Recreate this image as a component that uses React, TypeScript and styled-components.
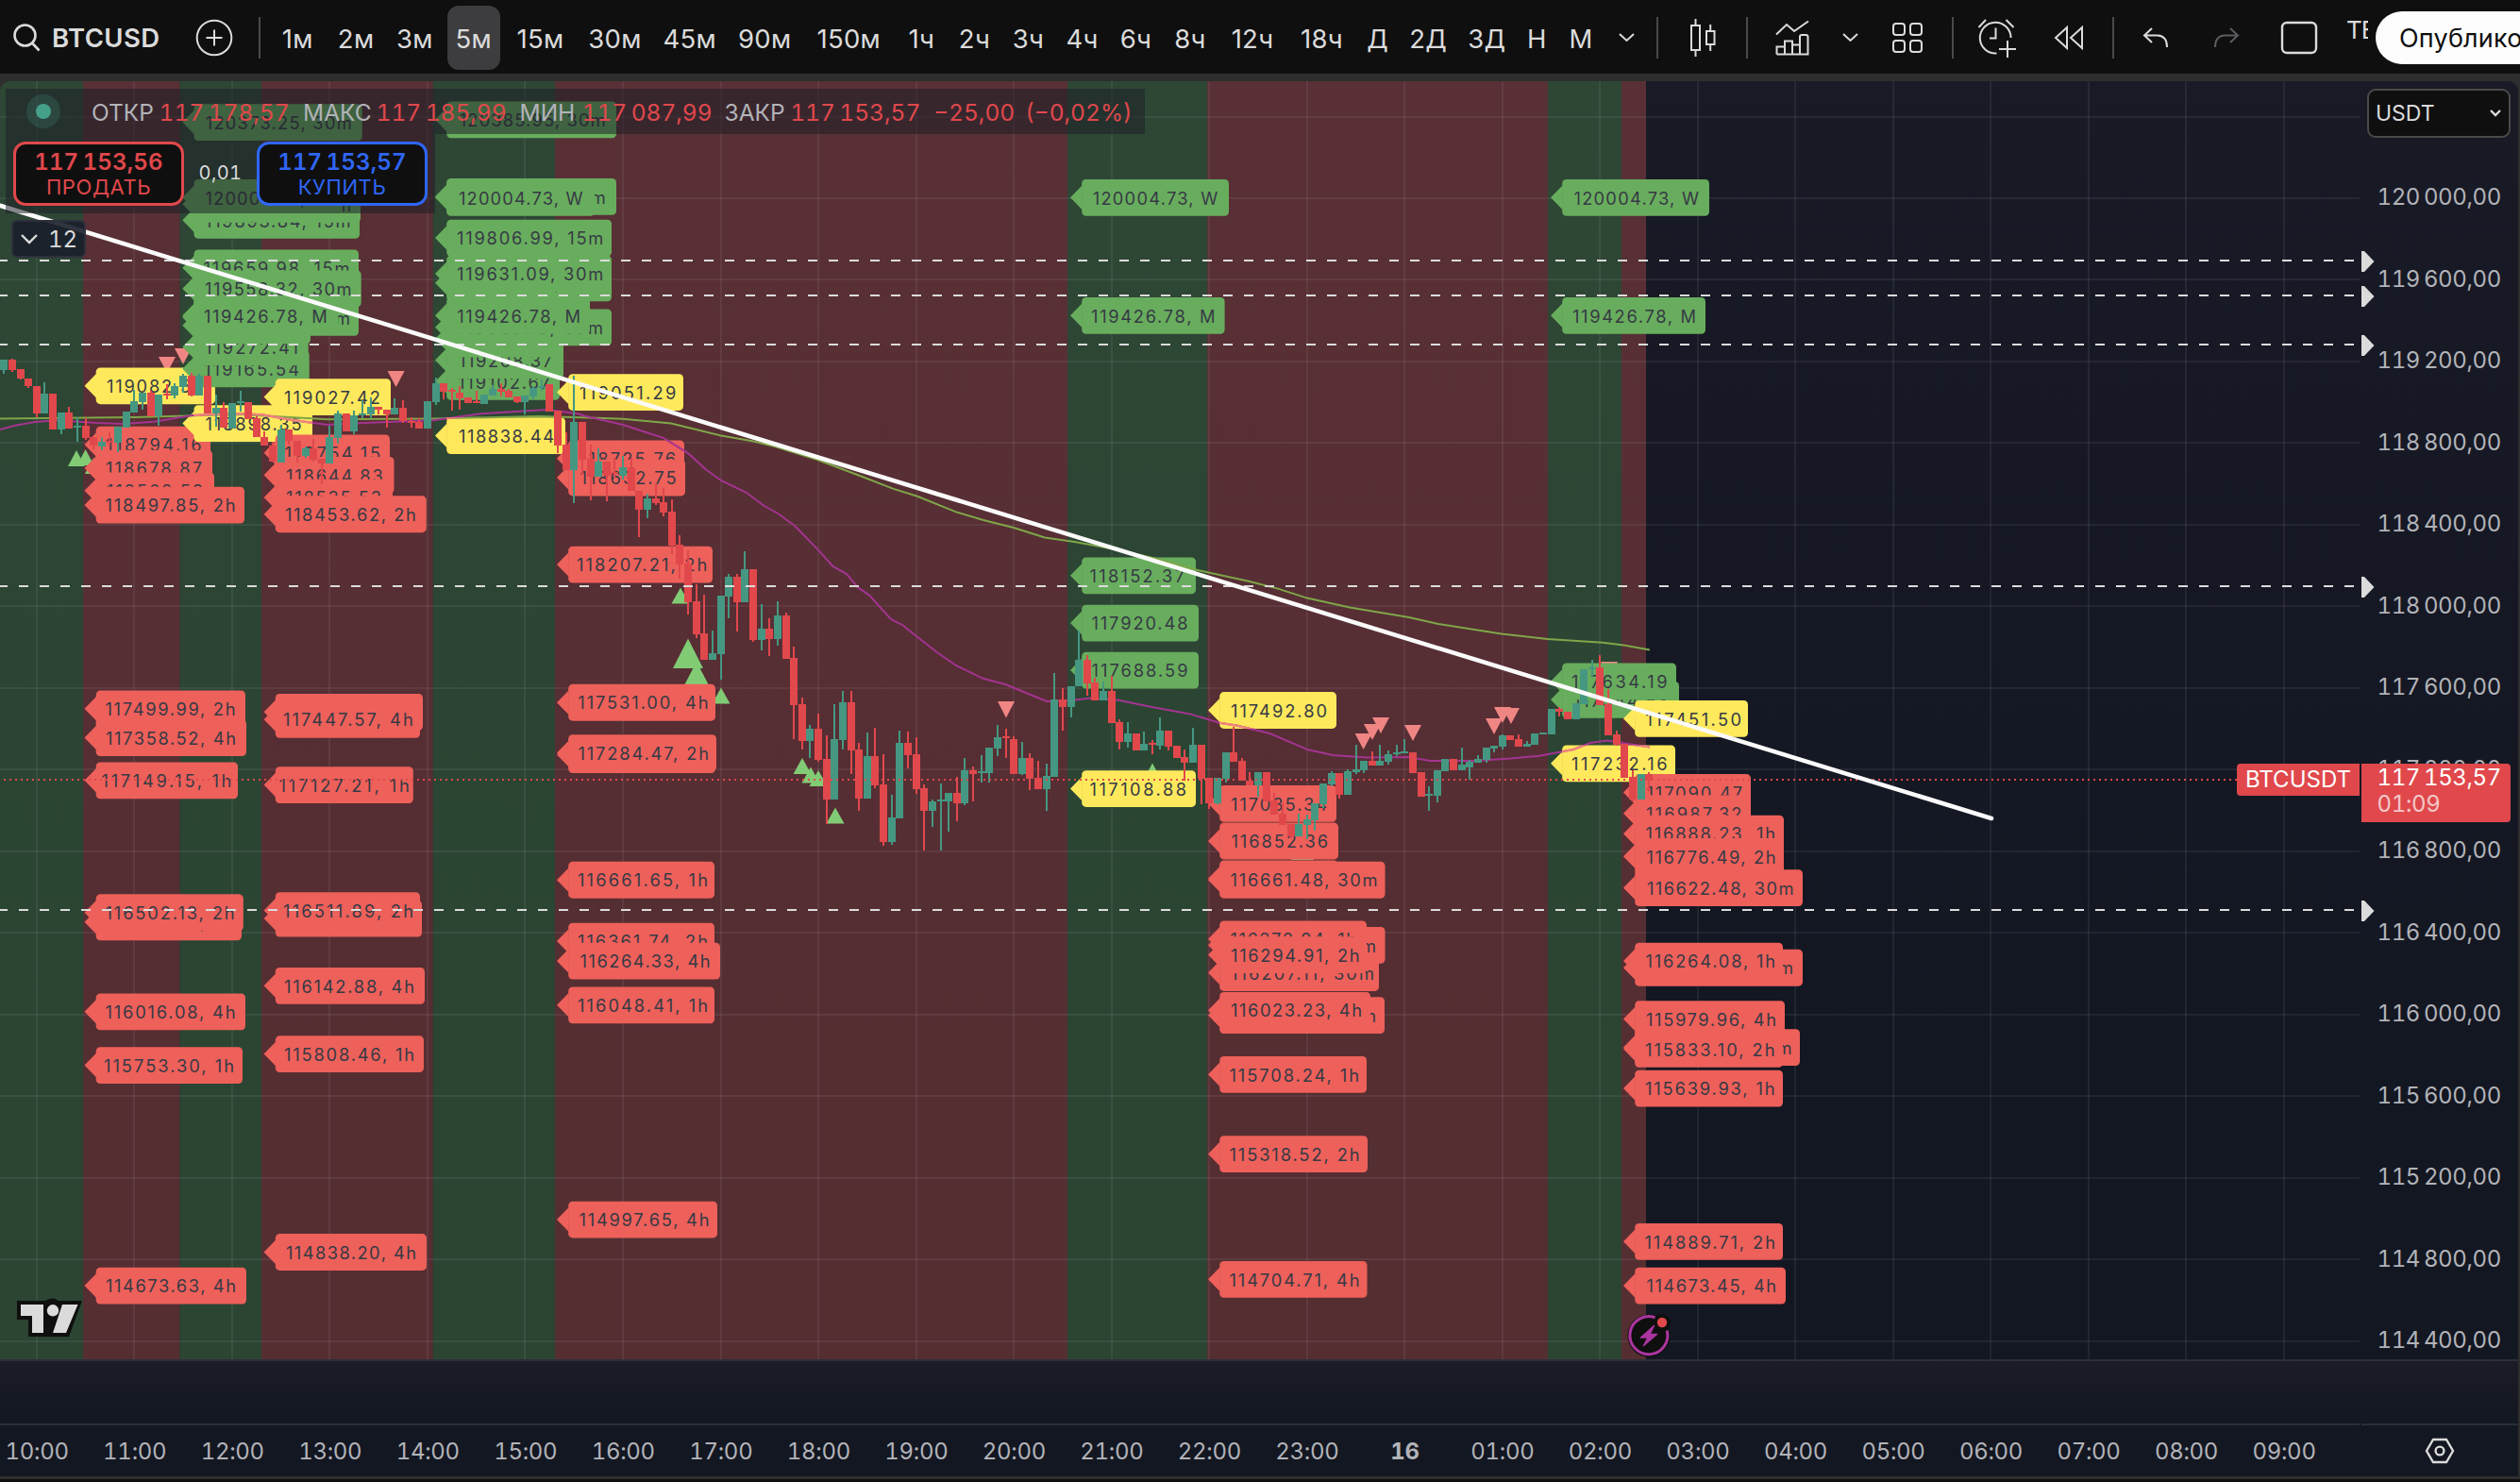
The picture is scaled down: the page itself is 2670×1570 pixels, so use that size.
import React from 'react';
import styled, { createGlobalStyle } from 'styled-components';

const GlobalStyle = createGlobalStyle`
  * { box-sizing: border-box; }
  html, body { margin: 0; padding: 0; background: #2e2e2e; overflow: hidden; }
  body { font-family: Inter, Roboto, "Liberation Sans", sans-serif; }
`;

const RED = '#e0484c';
const TEAL = '#459782';
const INK = '#dbdbdb';

/* ---------- price scale ---------- */
const TOP = 86;
const PLOT_W = 2500;
const PLOT_H = 1354;
const HOUR = 103.53;
const FIRST_HOUR = 38.8;
const STEP = 86.49;
const priceY = (p: number) => 210 + ((120000 - p) * STEP) / 400;

/* ---------- layout ---------- */
const Page = styled.div`
  width: 2670px;
  height: 1570px;
  display: flex;
  flex-direction: column;
  background: #2e2e2e;
  overflow: hidden;
`;

const Header = styled.header`
  height: 78px;
  padding-top: 2px;
  flex: none;
  display: flex;
  align-items: center;
  background: #0f0f0f;
  color: ${INK};
  margin-bottom: 8px;
  overflow: hidden;
`;

const Slot = styled.div<{ $w: number }>`
  width: ${(p) => p.$w}px;
  flex: none;
  height: 68px;
  display: flex;
  align-items: center;
  justify-content: center;
`;

const Divider = styled.div`
  width: 2px;
  height: 44px;
  flex: none;
  background: #4a4a4a;
`;

const Symbol = styled.div`
  width: 141px;
  flex: none;
  font-size: 27.5px;
  font-weight: 600;
  letter-spacing: 0.4px;
`;

const Interval = styled.div<{ $w: number }>`
  width: ${(p) => p.$w}px;
  flex: none;
  display: flex;
  justify-content: center;
`;

const IntervalText = styled.span<{ $active?: boolean }>`
  height: 68px;
  padding: 2px 9px 0;
  border-radius: 12px;
  display: flex;
  align-items: center;
  font-size: 27.5px;
  letter-spacing: 0.3px;
  white-space: nowrap;
  background: ${(p) => (p.$active ? '#3d3d3f' : 'transparent')};
`;

const LayoutName = styled.div`
  width: 23px;
  height: 40px;
  margin: 0 8px 14px 4px;
  padding-top: 3px;
  flex: none;
  overflow: hidden;
  font-size: 26px;
  letter-spacing: -1px;
  white-space: nowrap;
`;

const Publish = styled.div`
  height: 56px;
  width: 240px;
  flex: none;
  border-radius: 28px;
  background: #fdfdfd;
  color: #0f0f0f;
  font-size: 27px;
  line-height: 57px;
  padding-left: 25px;
  letter-spacing: 0.2px;
`;

const Body = styled.main`
  flex: none;
  width: 2668px;
  height: 1478px;
  display: grid;
  grid-template-columns: ${PLOT_W}px 168px;
  grid-template-rows: ${PLOT_H}px 68px 56px;
  border-radius: 10px 10px 0 0;
  background: linear-gradient(#181a26, #131722 70%);
  overflow: hidden;
`;

const Plot = styled.section`
  position: relative;
  overflow: hidden;
`;

const PriceAxis = styled.aside`
  position: relative;
  padding-top: ${210 - TOP - STEP / 2 - 1}px;
  overflow: hidden;
`;

const PriceTick = styled.div`
  height: ${STEP}px;
  padding-left: 18.5px;
  display: flex;
  align-items: center;
  font-size: 24px;
  color: #b2b3b8;
  white-space: nowrap;
`;

const Num = styled.span<{ $ls?: number }>`
  font-feature-settings: 'tnum';
  letter-spacing: ${(p) => p.$ls ?? 0}px;
  white-space: nowrap;
`;

const Strip = styled.div`
  border-top: 2px solid #2c2e3a;
  background: linear-gradient(#1a1c27, #131722);
`;

const TimeAxis = styled.div`
  border-top: 2px solid #2c2e3a;
  background: #131722;
  display: flex;
  align-items: center;
  overflow: hidden;
`;

const TimeTick = styled.div<{ $bold?: boolean; $first?: boolean }>`
  width: ${HOUR}px;
  flex: none;
  margin-left: ${(p) => (p.$first ? FIRST_HOUR + 0.4 - HOUR / 2 : 0)}px;
  padding-top: 1px;
  text-align: center;
  font-size: 24px;
  font-weight: ${(p) => (p.$bold ? 700 : 400)};
  color: #b2b3b8;
`;

const AxisCorner = styled.div`
  border-top: 2px solid #2c2e3a;
  background: #131722;
  display: flex;
  align-items: center;
  justify-content: center;
  margin-left: 2px;
`;

const Footer = styled.div`
  height: 3px;
  margin-top: 3px;
  flex: none;
  background: #0f0f0f;
`;

/* ---------- overlays ---------- */
const Legend = styled.div`
  position: absolute;
  left: 6px;
  top: 8px;
`;

const StatusRow = styled.div`
  width: 1207px;
  height: 48px;
  padding-left: 22px;
  display: flex;
  align-items: center;
  background: rgba(26, 28, 38, 0.52);
`;

const StatusDot = styled.div`
  width: 36px;
  height: 36px;
  margin-right: 33px;
  flex: none;
  border-radius: 50%;
  background: rgba(69, 151, 130, 0.22);
  display: flex;
  align-items: center;
  justify-content: center;

  &::after {
    content: '';
    width: 16px;
    height: 16px;
    border-radius: 50%;
    background: #45a08a;
  }
`;

const Quote = styled.span<{ $w: number; $red?: boolean }>`
  width: ${(p) => p.$w}px;
  flex: none;
  font-size: 24.5px;
  white-space: nowrap;
  font-feature-settings: ${(p) => (p.$red ? "'tnum'" : 'normal')};
  color: ${(p) => (p.$red ? RED : '#b2b3b8')};
  padding-top: 2px;
`;

const TradeRow = styled.div`
  width: 455px;
  height: 84px;
  padding: 8px;
  display: flex;
  background: rgba(26, 28, 38, 0.52);
`;

const TradeButton = styled.div<{ $color: string }>`
  width: 181px;
  height: 68px;
  padding-top: 2px;
  flex: none;
  border: 3px solid ${(p) => p.$color};
  border-radius: 13px;
  background: #0f0f0f;
  color: ${(p) => p.$color};
  display: flex;
  flex-direction: column;
  align-items: center;
  justify-content: center;
`;

const TradePrice = styled.span`
  font-size: 24px;
  line-height: 26px;
  font-weight: 600;
  font-feature-settings: 'tnum';
  letter-spacing: 0.2px;
`;

const TradeSide = styled.span`
  font-size: 22px;
  line-height: 27px;
  letter-spacing: 0.6px;
`;

const Spread = styled.span`
  width: 77px;
  padding: 21px 0 0;
  text-align: center;
  font-size: 20px;
  letter-spacing: 0.4px;
  font-feature-settings: 'tnum';
  color: ${INK};
`;

const Collapse = styled.div`
  width: 79px;
  height: 40px;
  margin: 7px 0 0 6px;
  border: 2px solid #2d303c;
  border-radius: 6px;
  background: rgba(26, 30, 42, 0.9);
  color: ${INK};
  font-size: 24px;
  font-feature-settings: 'tnum';
  display: flex;
  align-items: center;
  gap: 11px;
  padding-left: 8px;
`;

const PriceTag = styled.div`
  position: absolute;
  left: 2px;
  top: 723px;
  width: 158px;
  height: 62px;
  padding: 0 0 0 16.5px;
  border-radius: 0 4px 4px 0;
  background: ${RED};
  color: #fff;
  font-size: 24px;
  line-height: 29px;

  & > div:last-child { color: #f3c8c9; line-height: 27px; }
`;

const SymbolTag = styled.div`
  position: absolute;
  right: 0;
  top: 723px;
  width: 130px;
  height: 34px;
  border-radius: 4px 0 0 4px;
  background: ${RED};
  color: #fff;
  font-size: 24px;
  line-height: 34px;
  text-align: center;
`;

const Currency = styled.div`
  position: absolute;
  left: 8px;
  top: 8px;
  width: 152px;
  height: 52px;
  padding: 0 8px 0 7px;
  border: 2px solid #4a4a4a;
  border-radius: 9px;
  background: #0f0f0f;
  color: ${INK};
  font-size: 23px;
  display: flex;
  align-items: center;
  justify-content: space-between;
`;

const ArrowMark = styled.svg<{ $y: number }>`
  position: absolute;
  left: 2px;
  top: ${(p) => p.$y - TOP - 10}px;
`;

const Chart = styled.svg`
  display: block;
`;

const LabelText = styled.text`
  font-family: Inter, Roboto, sans-serif;
  font-size: 18.3px;
  fill: #363a45;
`;

/* ---------- data ---------- */
const intervals: [string, number][] = [
  ['1м', 61.5], ['2м', 62.25], ['3м', 62.25], ['5м', 62.5], ['15м', 79], ['30м', 79], ['45м', 79.5],
  ['90м', 79.5], ['150м', 98.5], ['1ч', 55.5], ['2ч', 57], ['3ч', 57], ['4ч', 57], ['6ч', 57], ['8ч', 58],
  ['12ч', 74], ['18ч', 73], ['Д', 45.5], ['2Д', 61.5], ['3Д', 62.5], ['Н', 43.5], ['М', 50],
];

const times = ['10:00', '11:00', '12:00', '13:00', '14:00', '15:00', '16:00', '17:00', '18:00', '19:00', '20:00',
  '21:00', '22:00', '23:00', '16', '01:00', '02:00', '03:00', '04:00', '05:00', '06:00', '07:00', '08:00', '09:00'];

const prices = [120000, 119600, 119200, 118800, 118400, 118000, 117600, 117200, 116800, 116400, 116000, 115600,
  115200, 114800, 114400];

const formatPrice = (p: number) => `${Math.floor(p / 1000)}\u2009${String(p % 1000).padStart(3, '0')},00`;

const GREEN_BAND = 'rgba(100,175,90,0.3)';
const RED_BAND = 'rgba(237,98,91,0.3)';
const bands: [number, number, string][] = [
  [0, 88, GREEN_BAND], [88, 190.5, RED_BAND], [190.5, 277, GREEN_BAND], [277, 458.7, RED_BAND],
  [458.7, 588, GREEN_BAND], [588, 1131, RED_BAND], [1131, 1279, GREEN_BAND], [1279, 1640, RED_BAND],
  [1640, 1718, GREEN_BAND], [1718, 1744, RED_BAND],
];

const levels = [276, 313, 365, 621, 964];

type Kind = 'g' | 'y' | 'r';
const fills: Record<Kind, string> = { g: '#68ad5d', y: '#fee95c', r: '#ee605a' };

/* kind, text, tip x, right edge, text start, text end; listed in paint order */
type Tag = [Kind, string, number, number, number, number];
const tags: Tag[] = [
  ['y', '119082.53', 89.5, 228, 113, 215],
  ['r', '118794.16', 89.5, 223, 112, 213.5],
  ['r', '118678.87', 89.5, 225, 112, 214],
  ['r', '118568.58', 89.5, 227, 113, 215],
  ['r', '118497.85, 2h', 89.5, 259, 111.5, 249.5],
  ['r', '117499.99, 2h', 89.5, 260, 111.5, 249.5],
  ['r', '117358.52, 4h', 89.5, 261, 112, 250],
  ['r', '117149.15, 1h', 89.5, 252, 107.6, 245.4],
  ['r', '116455.13, 1h', 89.5, 256, 110, 247],
  ['r', '116502.13, 2h', 89.5, 257.8, 111.5, 248.5],
  ['r', '116016.08, 4h', 89.5, 260, 111.5, 249.5],
  ['r', '115753.30, 1h', 89.5, 257, 110, 248],
  ['r', '114673.63, 4h', 89.5, 261, 112, 250],

  ['y', '118898.35', 193.3, 331, 217.5, 319.6],
  ['g', '119165.54', 193.3, 327.7, 216, 317],
  ['g', '119272.41', 193.3, 326.7, 217, 316],
  ['g', '119378.04', 193.3, 329, 217, 318],
  ['g', '119417.20, 15m', 193.3, 380, 216, 371],
  ['g', '119659.98, 15m', 193.3, 380, 215.5, 370.5],
  ['g', '119558.32, 30m', 193.3, 382.7, 217, 372.5],
  ['g', '119426.78, M', 193.3, 358, 216, 346.7],
  ['g', '119893.84, 15m', 193.3, 381, 217, 371.5],
  ['g', '119972.15, 30m', 193.3, 382, 217, 372],
  ['g', '120004.73, W', 193.3, 362, 217.5, 349],
  ['g', '120373.25, 30m', 193.3, 383.7, 217.7, 372.7],

  ['y', '119027.42', 279.6, 414, 301, 403],
  ['r', '118754.15', 279.6, 413, 301.5, 403],
  ['r', '118644.83', 279.6, 417.5, 303, 405.7],
  ['r', '118535.53', 279.6, 416, 303, 404],
  ['r', '118453.62, 2h', 279.6, 451.8, 302, 440.8],
  ['r', '117484.10, 2h', 279.6, 448, 300, 438],
  ['r', '117447.57, 4h', 279.6, 445, 300, 437.8],
  ['r', '117127.21, 1h', 279.6, 437.8, 295.4, 433.7],
  ['r', '116472.33, 4h', 279.6, 447, 300, 438],
  ['r', '116511.89, 2h', 279.6, 445, 300, 438],
  ['r', '116142.88, 4h', 279.6, 450, 301, 439],
  ['r', '115808.46, 1h', 279.6, 449, 301, 439],
  ['r', '114838.20, 4h', 279.6, 452, 303, 441],

  ['g', '119102.67', 461, 593, 485, 583],
  ['g', '119208.37', 461, 597, 486, 585],
  ['g', '119312.55', 461, 597, 486, 585],
  ['g', '119369.10, 30m', 461, 648, 484, 639],
  ['g', '119586.20, 15m', 461, 648, 484, 639],
  ['g', '119631.09, 30m', 461, 648, 484, 639.3],
  ['g', '119426.78, M', 461, 625, 484.3, 615],
  ['g', '119806.99, 15m', 461, 648, 484, 639.3],
  ['g', '120009.41, 30m', 461, 653, 486, 641.7],
  ['g', '120004.73, W', 461, 630, 486, 617.5],
  ['g', '120385.95, 30m', 461, 653, 486.7, 641.7],
  ['y', '118838.44', 461, 599, 486, 587],

  ['y', '119051.29', 590, 724, 614, 716.3],
  ['r', '118725.76', 590, 725, 614, 716],
  ['r', '118632.75', 590, 726, 614.5, 716.5],
  ['r', '118207.21, 2h', 590, 755, 611, 749.3],
  ['r', '117531.00, 4h', 590, 758, 612.3, 750.6],
  ['r', '117274.90, 1h', 590, 758, 612, 749],
  ['r', '117284.47, 2h', 590, 759, 612.5, 751],
  ['r', '116661.65, 1h', 590, 757, 612, 750],
  ['r', '116361.74, 2h', 590, 757, 612, 750],
  ['r', '116264.33, 4h', 590, 763, 614.5, 752.6],
  ['r', '116048.41, 1h', 590, 757, 612, 750],
  ['r', '114997.65, 4h', 590, 760, 613.5, 751.5],

  ['g', '120004.73, W', 1134, 1302, 1157.7, 1290.3],
  ['g', '119426.78, M', 1134, 1297.6, 1156, 1287.5],
  ['g', '118152.37', 1134, 1267, 1154.5, 1255],
  ['g', '117920.48', 1134, 1270, 1156.5, 1258.5],
  ['g', '117688.59', 1134, 1270, 1156.5, 1258.5],
  ['y', '117108.88', 1134, 1267, 1154.5, 1257],

  ['y', '117492.80', 1280, 1416, 1304, 1406],
  ['r', '117035.34', 1280, 1416, 1304, 1406],
  ['r', '116852.36', 1280, 1418, 1304.5, 1407],
  ['r', '116667.48', 1280, 1418, 1304.5, 1407],
  ['r', '116661.48, 30m', 1280, 1467.5, 1303.6, 1459.4],
  ['r', '116207.11, 30m', 1280, 1461, 1304, 1456],
  ['r', '116341.91, 30m', 1280, 1467.5, 1304, 1458],
  ['r', '116372.04, 1h', 1280, 1448, 1303.5, 1437],
  ['r', '116294.91, 2h', 1280, 1448, 1304, 1440.6],
  ['r', '115998.61, 30m', 1280, 1467, 1304, 1458],
  ['r', '116023.23, 4h', 1280, 1452, 1304, 1443],
  ['r', '115708.24, 1h', 1280, 1448, 1302.5, 1440],
  ['r', '115318.52, 2h', 1280, 1449, 1302.5, 1440.5],
  ['r', '114704.71, 4h', 1280, 1448.5, 1302.5, 1440.5],

  ['g', '120004.73, W', 1643, 1811, 1667.5, 1800],
  ['g', '119426.78, M', 1643, 1807, 1666, 1797],
  ['g', '117544.58', 1643, 1779, 1667, 1768],
  ['g', '117634.19', 1643, 1776, 1665, 1766.7],
  ['y', '117232.16', 1643, 1775, 1665, 1766.7],

  ['y', '117451.50', 1720, 1852, 1743.5, 1845],
  ['r', '117090.47', 1720, 1855, 1744.5, 1846],
  ['r', '116987.32', 1720, 1855, 1744, 1845.5],
  ['r', '116888.23, 1h', 1720, 1890, 1743.5, 1881],
  ['r', '116776.49, 2h', 1720, 1890, 1744.5, 1881.5],
  ['r', '116622.48, 30m', 1720, 1910, 1745, 1900.5],
  ['r', '116231.45, 30m', 1720, 1910, 1745, 1900],
  ['r', '116264.08, 1h', 1720, 1889, 1743.5, 1881],
  ['r', '115841.50, 30m', 1720, 1907, 1744, 1898.5],
  ['r', '115979.96, 4h', 1720, 1891, 1744, 1882],
  ['r', '115833.10, 2h', 1720, 1889, 1743, 1880.5],
  ['r', '115639.93, 1h', 1720, 1889, 1743, 1880.5],
  ['r', '114889.71, 2h', 1720, 1889, 1742.5, 1881],
  ['r', '114673.45, 4h', 1720, 1892, 1744.5, 1882],
];

/* direction (1 up, 0 down), body top, body bottom, high, low */
const candles: number[][] = [
  [1,381,392,381,396],[0,381,392,380,394],[0,391,401,391,402],[0,401,409,401,411],[0,409,438,409,442],
  [1,417,438,405,438],[0,417,455,417,455],[1,437,455,437,460],[0,437,454,431,454],[1,451,453,442,468],
  [0,451,464,443,466],[0,463,472,463,476],[1,468,473,463,477],[0,467,469,458,473],[1,452,469,452,479],
  [1,436,453,436,453],[1,425,437,413,437],[1,416,426,416,434],[0,416,441,414,441],[1,418,441,418,451],
  [0,417,419,407,423],[1,409,419,406,422],[1,398,410,396,416],[0,398,419,395,420],[1,398,419,396,419],
  [0,398,438,398,438],[1,432,438,418,452],[0,432,453,426,453],[1,427,454,427,454],[1,425,427,414,436],
  [0,426,444,426,444],[0,443,463,441,463],[0,463,472,457,472],[0,472,489,468,489],[1,455,490,450,490],
  [0,455,467,455,471],[0,467,483,467,490],[1,475,483,473,485],[0,475,487,465,489],[0,486,491,486,513],
  [1,463,491,451,491],[1,438,464,435,470],[0,438,457,438,457],[1,440,457,435,460],[1,438,440,424,443],
  [1,431,439,421,443],[0,431,434,431,439],[0,434,439,434,453],[1,432,439,422,439],[0,432,446,424,448],
  [0,446,448,442,453],[0,447,454,443,454],[1,425,454,425,454],[1,406,426,400,429],[0,406,415,406,423],
  [0,413,415,411,435],[0,416,422,409,434],[0,421,427,421,427],[0,425,427,414,427],[1,418,428,418,428],
  [1,412,419,408,419],[0,412,415,406,420],[0,414,421,412,421],[0,420,426,420,427],[1,419,426,419,439],
  [1,411,420,409,423],[1,409,411,402,414],[0,407,436,407,436],[0,435,472,435,480],[0,471,498,458,498],
  [1,447,498,398,533],[0,447,487,447,503],[0,486,505,471,530],[1,489,505,475,505],[0,489,504,489,531],
  [0,500,502,485,506],[1,495,504,483,508],[0,495,520,485,520],[0,520,540,520,569],[1,528,540,523,549],
  [0,528,533,513,535],[0,532,543,517,547],[0,542,578,529,587],[0,577,598,567,613],[0,597,638,583,651],
  [0,637,672,619,676],[0,671,699,630,699],[1,692,699,668,699],[1,631,693,631,720],[1,611,632,608,655],
  [0,611,638,608,669],[1,603,638,584,638],[0,603,678,603,680],[1,666,678,640,689],[0,666,677,655,695],
  [1,652,677,637,684],[0,652,698,649,698],[0,697,747,685,783],[0,746,785,739,794],[1,772,785,768,803],
  [0,772,805,756,807],[0,804,847,779,873],[1,783,847,746,847],[1,744,784,732,794],[0,744,795,732,820],
  [0,794,846,787,859],[1,801,846,776,846],[0,801,832,771,835],[0,831,892,799,896],[1,866,892,842,895],
  [1,787,867,774,867],[0,787,800,775,814],[0,799,836,781,841],[0,835,859,831,901],[1,849,859,847,876],
  [1,847,849,830,901],[1,840,849,840,881],[0,840,851,823,870],[1,816,851,803,853],[0,816,820,812,849],
  [1,817,819,800,829],[1,792,819,792,829],[1,781,793,768,801],[0,780,782,772,803],[0,783,820,780,820],
  [1,803,820,786,821],[0,803,825,798,837],[0,824,836,806,836],[1,822,836,809,859],[1,741,823,713,823],
  [0,741,749,729,774],[1,727,749,727,760],[1,699,727,668,727],[0,699,724,694,737],[0,723,742,718,742],
  [1,732,742,722,742],[0,732,766,716,766],[0,765,786,762,794],[1,777,786,765,792],[0,777,795,777,795],
  [1,788,795,775,795],[0,787,789,784,799],[1,774,790,760,794],[0,774,791,774,795],[0,790,803,790,803],
  [0,802,808,794,827],[1,789,808,771,808],[0,789,825,789,852],[0,824,851,824,857],[1,824,851,824,852],
  [1,797,825,797,829],[0,797,807,770,807],[0,806,827,803,827],[0,827,832,818,832],[1,818,832,818,844],
  [0,818,849,818,849],[0,848,863,840,863],[0,862,874,851,874],[0,873,886,873,888],[1,873,886,862,886],
  [1,868,874,863,889],[1,851,869,851,880],[1,830,852,830,856],[1,819,831,817,833],[0,819,842,819,846],
  [1,817,842,815,842],[1,815,818,789,820],[1,806,816,806,819],[0,806,811,796,811],[1,806,811,789,811],
  [1,799,807,795,810],[1,797,799,789,801],[1,796,798,783,798],[0,797,819,797,819],[0,818,844,818,844],
  [1,841,843,833,859],[1,816,843,816,850],[1,804,817,804,817],[0,804,816,804,816],[1,810,816,792,816],
  [1,807,813,805,826],[1,804,808,800,808],[1,792,805,792,808],[1,790,793,790,797],[1,779,791,778,794],
  [0,779,784,779,784],[0,783,791,778,791],[1,788,791,785,791],[1,777,789,777,789],[1,776,778,776,778],
  [1,751,778,751,778],[0,751,754,749,759],[0,754,762,754,762],[1,745,762,745,762],[1,709,746,709,746],
  [1,707,709,699,716],[0,707,747,694,747],[0,746,779,730,779],[0,778,789,774,790],[0,788,824,788,824],
  [0,823,847,816,849],[1,820,847,820,847],[0,820,827,818,838],
];

const slowAverage = '0,443.5 143,442 253,439 347,444.3 459,443.5 571,441 640,443 660,443.7 711,448.6 764,461.6 797,467.3 821,473 866,487 911,504 946,517.6 972,525.7 1013,542.4 1042,551 1074,559 1107,569.4 1140,574.3 1176,581 1225,591.8 1267,603.6 1323,615.7 1354,623.6 1385,633.6 1430,643.6 1493,654 1524,661 1591,671.4 1640,677 1698,680.7 1720.5,683.6 1748,688.6';
const fastAverage = '0,455 16,450.7 37,447 61,445.3 102,448 131,449 163,446.7 204,440 245,438 277.5,439.3 310,445 347,450 392,447.7 459,445.3 510,438.3 580,434 612,438.3 621,441 660,450 703,464 729.4,480.4 748,497.5 764,509 791,522 809,535.5 825,544.5 842,557 866,581.6 882.5,600 897,608 909,622.4 921,630.6 944,656 956,662 972,674.7 992.7,691 1013,705 1041.6,718.8 1066,725.3 1090.6,735.5 1109,743 1135.5,742 1156,739.6 1185,741.8 1220.5,749 1261,756.4 1292,765.7 1310,768.6 1345.5,777 1386,794.3 1412.5,800 1448,802.5 1493,802 1515,806 1564,806 1600,803.6 1631,800.7 1667,794 1685,787 1703,784.6 1725,788 1748,791.4';

/* centre x, top y, width, height */
const sellMarks: number[][] = [
  [177, 378, 18, 17], [194, 369, 18, 17], [419.6, 393, 18, 17], [1066, 743, 18, 17.5], [1444.6, 777, 18, 17],
  [1454, 767, 18, 17], [1463, 760, 18, 17], [1497, 768, 18, 17], [1583, 761, 18, 17], [1592, 749, 18, 17],
  [1601, 750, 18, 17], [1705, 701, 18, 17],
];
const buyMarks: number[][] = [
  [81, 477, 18, 17], [90.6, 476, 18, 17], [99, 485, 18, 17], [721, 622.5, 19, 17], [729, 676.5, 32, 31.5],
  [738, 701, 25, 24], [764, 728.5, 19, 17], [850, 803, 19, 17], [859, 812.5, 19, 17], [867, 816, 19, 17],
  [885, 855.5, 19, 17], [1221, 808.6, 18, 17], [1380, 888, 24, 23],
];

/* ---------- chart parts ---------- */
const PriceLabel = ({ tag }: { tag: Tag }) => {
  const [kind, text, tip, right, from, to] = tag;
  const y = priceY(parseFloat(text)) + 0.3;
  const left = tip + 12.2;
  return (
    <g fill={fills[kind]}>
      <path d={`M${tip} ${y}L${left + 0.5} ${y - 13}V${y + 13}Z`} />
      <rect x={left} y={y - 19.3} width={right - left} height={38.8} rx={4.5} />
      <LabelText x={from} y={y + 7.3} textLength={to - from}>{text}</LabelText>
    </g>
  );
};

const Candle = ({ index, data }: { index: number; data: number[] }) => {
  const [up, top, bottom, high, low] = data;
  const x = 4.3 + index * 8.628;
  const color = up ? TEAL : RED;
  return (
    <g fill={color}>
      <rect x={Math.round(x) - 1} y={high} width={2} height={low - high} />
      <rect x={Math.round(x) - 4} y={top} width={8} height={bottom - top} />
    </g>
  );
};

const PlotDrawing = () => (
  <Chart width={PLOT_W} height={PLOT_H} viewBox={`0 ${TOP} ${PLOT_W} ${PLOT_H}`}>
    {/* the fast average turns salmon where it runs across a yellow label */}
    <clipPath id="overYellow">
      {tags.filter(([kind]) => kind === 'y').map(([, text, tip, right]) => (
        <rect key={text} x={tip + 12} y={priceY(parseFloat(text)) - 19} width={right - tip - 12} height={38.8} />
      ))}
    </clipPath>
    {bands.map(([a, b, c]) => <rect key={a} x={a} y={TOP} width={b - a} height={PLOT_H} fill={c} />)}
    <g fill="rgba(240,243,250,0.065)">
      {times.map((t, i) => <rect key={t} x={Math.round(FIRST_HOUR + i * HOUR) - 1} y={TOP} width={2} height={PLOT_H} />)}
      {[120400, ...prices].map((p) => <rect key={p} x={0} y={Math.round(priceY(p)) - 1} width={PLOT_W} height={2} />)}
    </g>
    <g fill="#f08684">
      {sellMarks.map(([x, y, w, h]) => <path key={x} d={`M${x - w / 2} ${y}H${x + w / 2}L${x} ${y + h}Z`} />)}
    </g>
    <g fill="#82cb75">
      {buyMarks.map(([x, y, w, h]) => <path key={x} d={`M${x - w / 2} ${y + h}H${x + w / 2}L${x} ${y}Z`} />)}
    </g>
    {tags.map((t, i) => <PriceLabel key={i} tag={t} />)}
    <polyline points={slowAverage} fill="none" stroke="#7fa648" strokeWidth={2} />
    <polyline points={fastAverage} fill="none" stroke="#a33490" strokeWidth={2} />
    <polyline points={fastAverage} fill="none" stroke="#f0857c" strokeWidth={2.4} clipPath="url(#overYellow)" />
    {candles.map((c, i) => <Candle key={i} index={i} data={c} />)}
    <path d="M4 826H2370" stroke={RED} strokeWidth={2} strokeDasharray="2 4" />
    {levels.map((y) => (
      <path key={y} d={`M-2 ${y}H2496`} stroke={INK} strokeWidth={2} strokeDasharray="10 12" />
    ))}
    <path d="M0 217.8L2110 867" stroke="#fafafa" strokeWidth={4.6} strokeLinecap="round" />
    <g>
      <circle cx={1747} cy={1415} r={22.5} fill="#0f0f0f" />
      <circle cx={1761} cy={1401} r={9} fill="#0f0f0f" />
      <path d="M1753.5 1395.8A20 20 0 1 0 1766.2 1409.5" fill="none" stroke="#ab35a0" strokeWidth={3} />
      <path d="M1752.5 1404.5L1738.5 1417H1746L1741.5 1425.5L1755.5 1413.5H1748Z" fill="#ab35a0" stroke="#ab35a0" strokeWidth={1.5} strokeLinejoin="round" />
      <circle cx={1761} cy={1401} r={5.2} fill={RED} />
    </g>
    <g>
      <path d="M18 1378H48Q56 1373 62 1378H87L73 1416H30V1398H18Z" fill="#0f0f0f" />
      <path d="M22 1382H46V1412H34V1394H22Z" fill={INK} />
      <circle cx={56} cy={1388.3} r={6.2} fill={INK} />
      <path d="M66 1382H82.5L70 1412H56Z" fill={INK} />
    </g>
  </Chart>
);

/* ---------- icons ---------- */
const Icon = ({ w, h, children, sw = 2, color = INK }: {
  w: number; h: number; children: React.ReactNode; sw?: number; color?: string;
}) => (
  <svg width={w} height={h} viewBox={`0 0 ${w} ${h}`} fill="none" stroke={color} strokeWidth={sw}>{children}</svg>
);

const Chevron = ({ w = 16, h = 9, sw = 2 }: { w?: number; h?: number; sw?: number }) => (
  <Icon w={w} h={h} sw={sw}><path d={`M1 1L${w / 2} ${h - 2}L${w - 1} 1`} /></Icon>
);

const TopBar = () => (
  <Header>
    <Slot $w={55}>
      <Icon w={30} h={30} sw={2.6}><circle cx={13.5} cy={12.5} r={11} /><path d="M21 20.5L28.5 28.5" /></Icon>
    </Slot>
    <Symbol>BTCUSD</Symbol>
    <Slot $w={62}>
      <Icon w={40} h={40}><circle cx={20} cy={20} r={18.3} /><path d="M20 11.5V28.5M11.5 20H28.5" /></Icon>
    </Slot>
    <Slot $w={16} />
    <Divider />
    <Slot $w={8.5} />
    {intervals.map(([label, w]) => (
      <Interval key={label} $w={w}><IntervalText $active={label === '5м'}>{label}</IntervalText></Interval>
    ))}
    <Slot $w={46}><Chevron w={17} h={10} /></Slot>
    <Slot $w={9} />
    <Divider />
    <Slot $w={93}>
      <Icon w={28} h={42}>
        <rect x={2} y={8} width={9} height={26} /><path d="M6.5 1V8M6.5 34V41" />
        <rect x={18} y={14} width={8.5} height={14} /><path d="M22.2 7V14M22.2 28V35" />
      </Icon>
    </Slot>
    <Divider />
    <Slot $w={94}>
      <Icon w={36} h={38}>
        <path d="M1 15.5L12 5L20 12L35 1.5M1.5 36.5V28.5H10V36M10 28V22.5H18V36M18 26.5H26V36M26 26V18Q26 16 28 16H32.5Q34.5 16 34.5 18V36.5H1.5" />
      </Icon>
    </Slot>
    <Slot $w={28}><Chevron w={17} h={10} /></Slot>
    <Slot $w={94}>
      <Icon w={34} h={34}>
        <rect x={2} y={2} width={12} height={12} rx={3} /><rect x={20} y={2} width={12} height={12} rx={3} />
        <rect x={2} y={20} width={12} height={12} rx={3} /><rect x={20} y={20} width={12} height={12} rx={3} />
      </Icon>
    </Slot>
    <Divider />
    <Slot $w={92}>
      <Icon w={42} h={42}>
        <path d="M20.5 37.5A16.4 16.4 0 1 1 35.6 21M1.5 10L9 2M30.5 2L38.5 10M19.5 10.5V21.5H13M32 24V42M23 33H41" />
      </Icon>
    </Slot>
    <Slot $w={60}>
      <Icon w={32} h={28}><path d="M14 3V25L2 14ZM30 3V25L18 14Z" /></Icon>
    </Slot>
    <Slot $w={16} />
    <Divider />
    <Slot $w={88}>
      <Icon w={28} h={24}><path d="M10 2L2 9.5L10 17M2 9.5H15Q26 9.5 26 22" /></Icon>
    </Slot>
    <Slot $w={62}>
      <Icon w={28} h={24} color="#5c5c60"><path d="M18 2L26 9.5L18 17M26 9.5H13Q2 9.5 2 22" /></Icon>
    </Slot>
    <Slot $w={92}>
      <Icon w={40} h={36} sw={2.4}><rect x={2} y={2} width={36} height={32} rx={5} /></Icon>
    </Slot>
    <LayoutName>ТЕ</LayoutName>
    <Publish>Опубликовать</Publish>
  </Header>
);

export default function App() {
  return (
    <Page>
      <GlobalStyle />
      <TopBar />
      <Body>
        <Plot>
          <PlotDrawing />
          <Legend>
            <StatusRow>
              <StatusDot />
              <Quote $w={71.5}>ОТКР</Quote><Quote $w={152.5} $red>117{'\u2009'}178,57</Quote>
              <Quote $w={77.5}>МАКС</Quote><Quote $w={152} $red>117{'\u2009'}185,99</Quote>
              <Quote $w={66}>МИН</Quote><Quote $w={151} $red>117{'\u2009'}087,99</Quote>
              <Quote $w={69.7}>ЗАКР</Quote><Quote $w={152} $red>117{'\u2009'}153,57</Quote>
              <Quote $w={97} $red>−25,00</Quote><Quote $w={112} $red>(−0,02%)</Quote>
            </StatusRow>
            <TradeRow>
              <TradeButton $color={RED}>
                <TradePrice>117{'\u2009'}153,56</TradePrice><TradeSide>ПРОДАТЬ</TradeSide>
              </TradeButton>
              <Spread>0,01</Spread>
              <TradeButton $color="#2f66f6">
                <TradePrice>117{'\u2009'}153,57</TradePrice><TradeSide>КУПИТЬ</TradeSide>
              </TradeButton>
            </TradeRow>
            <Collapse><Chevron w={18} h={11} sw={2.4} />12</Collapse>
          </Legend>
          <SymbolTag>BTCUSDT</SymbolTag>
        </Plot>
        <PriceAxis>
          {prices.map((p) => <PriceTick key={p}><Num $ls={-0.4}>{formatPrice(p)}</Num></PriceTick>)}
          {levels.map((y) => (
            <ArrowMark key={y} $y={y} width={14} height={22}><path d="M0 0H3L13.5 11L3 22H0Z" fill={INK} /></ArrowMark>
          ))}
          <Currency>USDT<Chevron w={12} h={8} sw={2.4} /></Currency>
          <PriceTag><div><Num $ls={-0.4}>117{'\u2009'}153,57</Num></div><div><Num $ls={-0.35}>01:09</Num></div></PriceTag>
        </PriceAxis>
        <Strip /><Strip />
        <TimeAxis>
          {times.map((t, i) => (
            <TimeTick key={t} $first={i === 0} $bold={t === '16'}><Num $ls={-0.3}>{t}</Num></TimeTick>
          ))}
        </TimeAxis>
        <AxisCorner>
          <Icon w={32} h={28} sw={2.4}><path d="M2 14L9 2H23L30 14L23 26H9Z" /><circle cx={16} cy={14} r={4.4} /></Icon>
        </AxisCorner>
      </Body>
      <Footer />
    </Page>
  );
}
